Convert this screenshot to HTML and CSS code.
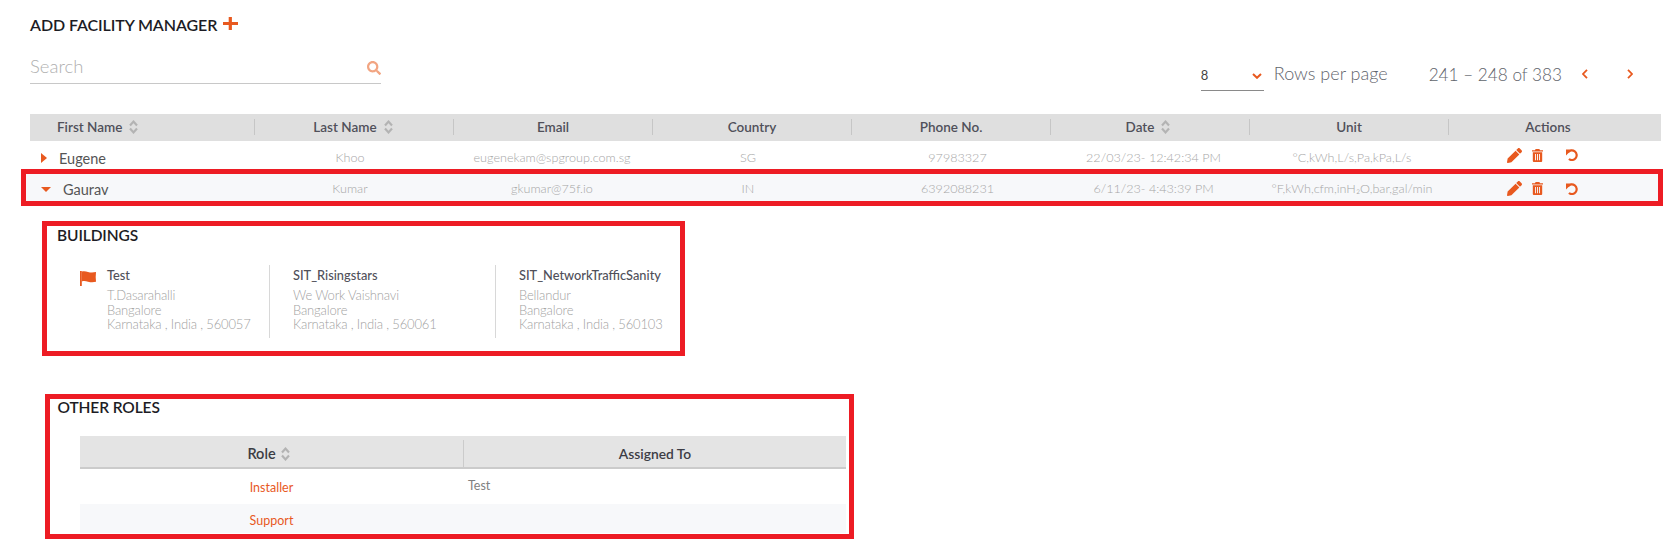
FILE: index.html
```html
<!DOCTYPE html>
<html lang="en">
<head>
<meta charset="utf-8">
<title>Facility Managers</title>
<link rel="stylesheet" href="styles.css">
</head>
<body>
<svg class="defs" width="0" height="0" aria-hidden="true">
  <symbol id="sort" viewBox="0 0 9 14"><path d="M1 5.400 4.500 1.600 8 5.400M1 8.600l3.500 3.800L8 8.600" fill="none" stroke="currentColor" stroke-width="2.200"/></symbol>
  <symbol id="pencil" viewBox="0 0 512 512"><path fill="currentColor" d="M497.900 142.100l-46.100 46.100c-4.700 4.700-12.300 4.700-17 0l-111-111c-4.700-4.700-4.700-12.300 0-17l46.100-46.100c18.700-18.700 49.100-18.700 67.900 0l60.100 60.100c18.800 18.700 18.800 49.100 0 67.900zM284.200 99.800L21.600 362.400.4 483.900c-2.900 16.400 11.400 30.600 27.800 27.800l121.500-21.300 262.600-262.600c4.700-4.700 4.700-12.300 0-17l-111-111c-4.800-4.700-12.400-4.700-17.100 0z"/></symbol>
  <symbol id="trash" viewBox="0 0 11 13"><path fill="currentColor" fill-rule="evenodd" d="M3.600 0h3.800l.6 1.200H11v1.300H0V1.200h3zM.8 3.300h9.400V12a1 1 0 0 1-1 1H1.800a1 1 0 0 1-1-1zM3 5v6.200h.9V5zm2.050 0v6.200h.9V5zM7.100 5v6.200H8V5z"/></symbol>
  <symbol id="undo" viewBox="0 0 12 12"><path fill="none" stroke="currentColor" stroke-width="2.200" d="M2 3.400A4.800 4.800 0 1 1 2.900 10"/><path fill="currentColor" d="M0 .4h6L0 6.400z"/></symbol>
</svg>

<header class="title">
  <h1>ADD FACILITY MANAGER</h1>
  <svg class="plus" viewBox="0 0 15 13" aria-hidden="true"><path d="M5.700 0h3.200v4.900H15v3.200H8.900V13H5.700V8.100H0V4.900h5.700z"/></svg>
</header>

<section class="toolbar">
  <div class="search">
    <span class="search-text">Search</span>
    <svg class="search-icon" viewBox="0 0 512 512" aria-hidden="true"><path d="M505 442.700 405.300 343c-4.500-4.500-10.600-7-17-7H372c27.600-35.300 44-79.700 44-128C416 93.100 322.900 0 208 0S0 93.100 0 208s93.100 208 208 208c48.300 0 92.700-16.400 128-44v16.300c0 6.400 2.500 12.500 7 17l99.700 99.700c9.400 9.400 24.600 9.400 33.900 0l28.300-28.300c9.400-9.400 9.400-24.600.1-34zM208 336c-70.700 0-128-57.200-128-128 0-70.700 57.200-128 128-128 70.700 0 128 57.200 128 128 0 70.700-57.200 128-128 128z"/></svg>
  </div>
  <div class="pager">
    <div class="select">
      <span>8</span>
      <svg class="select-chevron" viewBox="0 0 10 6" aria-hidden="true"><path d="M1 1l4 3.800L9 1"/></svg>
    </div>
    <span class="rows-label">Rows per page</span>
    <span class="range">241 – 248 of 383</span>
    <svg class="page-arrow prev" viewBox="0 0 6 10" aria-hidden="true"><path d="M5 .8 1 5l4 4.200"/></svg>
    <svg class="page-arrow next" viewBox="0 0 6 10" aria-hidden="true"><path d="M1 .8 5 5 1 9.200"/></svg>
  </div>
</section>

<section class="managers">
  <div class="thead">
    <div class="th th-first"><span>First Name</span><svg class="sort"><use href="#sort"/></svg></div>
    <div class="th th-last"><span>Last Name</span><svg class="sort"><use href="#sort"/></svg></div>
    <div class="th">Email</div>
    <div class="th">Country</div>
    <div class="th">Phone No.</div>
    <div class="th th-date"><span>Date</span><svg class="sort"><use href="#sort"/></svg></div>
    <div class="th">Unit</div>
    <div class="th th-actions">Actions</div>
  </div>

  <div class="row">
    <div class="first-cell"><span class="caret-right"></span><span class="name">Eugene</span></div>
    <div class="cell">Khoo</div>
    <div class="cell">eugenekam@spgroup.com.sg</div>
    <div class="cell">SG</div>
    <div class="cell">97983327</div>
    <div class="cell">22/03/23- 12:42:34 PM</div>
    <div class="cell">°C,kWh,L/s,Pa,kPa,L/s</div>
    <div class="actions">
      <svg class="ic-pencil"><use href="#pencil"/></svg>
      <svg class="ic-trash"><use href="#trash"/></svg>
      <svg class="ic-undo"><use href="#undo"/></svg>
    </div>
  </div>

  <div class="row-open">
    <div class="row row-inner">
      <div class="first-cell"><span class="caret-down"></span><span class="name">Gaurav</span></div>
      <div class="cell">Kumar</div>
      <div class="cell">gkumar@75f.io</div>
      <div class="cell">IN</div>
      <div class="cell">6392088231</div>
      <div class="cell">6/11/23- 4:43:39 PM</div>
      <div class="cell">°F,kWh,cfm,inH₂O,bar,gal/min</div>
      <div class="actions">
        <svg class="ic-pencil"><use href="#pencil"/></svg>
        <svg class="ic-trash"><use href="#trash"/></svg>
        <svg class="ic-undo"><use href="#undo"/></svg>
      </div>
    </div>
  </div>
</section>

<section class="buildings">
  <h2>BUILDINGS</h2>
  <div class="building-list">
    <article class="building building-flagged">
      <svg class="flag" viewBox="0 0 16 15" aria-hidden="true"><path d="M0 0h1.800v15H0z"/><path d="M1.800.6c2.200-.6 3.900-.3 6.200.3 2.600.7 5 .7 8 .1-.4 3.300-.4 6.600 0 9.800-3 .7-5.400.5-8-.1-2.300-.7-4-.9-6.200-.3z"/></svg>
      <div class="building-body">
        <h3>Test</h3>
        <p>T.Dasarahalli<br>Bangalore<br>Karnataka , India , 560057</p>
      </div>
    </article>
    <article class="building building-second">
      <div class="building-body">
        <h3>SIT_Risingstars</h3>
        <p>We Work Vaishnavi<br>Bangalore<br>Karnataka , India , 560061</p>
      </div>
    </article>
    <article class="building building-third">
      <div class="building-body">
        <h3>SIT_NetworkTrafficSanity</h3>
        <p>Bellandur<br>Bangalore<br>Karnataka , India , 560103</p>
      </div>
    </article>
  </div>
</section>

<section class="roles">
  <h2>OTHER ROLES</h2>
  <div class="roles-table">
    <div class="roles-head">
      <div class="roles-th roles-th-first"><span>Role</span><svg class="sort"><use href="#sort"/></svg></div>
      <div class="roles-th roles-th-second">Assigned To</div>
    </div>
    <div class="roles-row">
      <div class="role-name">Installer</div>
      <div class="role-assigned">Test</div>
    </div>
    <div class="roles-row roles-row-alt">
      <div class="role-name">Support</div>
      <div class="role-assigned"></div>
    </div>
  </div>
</section>
</body>
</html>
```

FILE: styles.css
```css
* { box-sizing: border-box; }

html, body { margin: 0; padding: 0; }

body {
  width: 1677px;
  height: 543px;
  overflow: hidden;
  background: #fff;
  font-family: Lato, "Liberation Sans", sans-serif;
  color: #555;
}

.defs { position: absolute; }

h1, h2, h3, p { margin: 0; }

.title {
  display: flex;
  align-items: flex-start;
  gap: 6px;
  height: 40px;
  padding: 15px 0 0 30px;
}

.title h1 {
  font-size: 16px;
  line-height: 20px;
  font-weight: 600;
  letter-spacing: -0.1px;
  color: #1c1c24;
}

.plus { width: 15px; height: 13px; margin-top: 2px; fill: #e8591f; }

.toolbar {
  display: flex;
  justify-content: space-between;
  height: 74px;
  padding: 0 30px;
}

.search {
  display: flex;
  align-items: center;
  justify-content: space-between;
  width: 351px;
  height: 44px;
  padding-top: 9px;
  border-bottom: 1px solid #c8c8c8;
}

.search-text { font-size: 18.500px; font-weight: 300; color: #b0b0b0; }

.search-icon { width: 14px; height: 14px; fill: #f2a582; margin-top: 3px; }

.pager {
  display: flex;
  align-items: flex-start;
  height: 52px;
  padding: 22px 0 0;
  margin-right: 14px;
}

.select {
  display: flex;
  justify-content: space-between;
  width: 63px;
  height: 29px;
  padding: 4px 2px 0 0;
  border-bottom: 1px solid #8a8a8a;
  font-size: 13px;
  line-height: 18px;
  color: #444;
}

.select-chevron {
  width: 10px;
  height: 6px;
  margin-top: 7px;
  fill: none;
  stroke: #e8591f;
  stroke-width: 2;
}

.rows-label {
  margin-left: 10px;
  font-size: 18px;
  line-height: 22px;
  font-weight: 300;
  color: #5f646c;
}

.range {
  margin-left: 41px;
  margin-top: 2px;
  font-size: 17.200px;
  line-height: 22px;
  font-weight: 300;
  color: #5f646c;
}

.page-arrow {
  width: 6px;
  height: 10px;
  margin-top: 7px;
  fill: none;
  stroke: #e8591f;
  stroke-width: 1.800;
}

.prev { margin-left: 20px; }
.next { margin-left: 39px; }

.thead {
  display: grid;
  grid-template-columns: 225px repeat(6, 199px) 212px;
  height: 27px;
  margin: 0 16px 0 30px;
  background: #dfdfdf;
}

.th {
  display: flex;
  align-items: center;
  justify-content: center;
  gap: 7px;
  height: 16px;
  margin-top: 5px;
  border-right: 1px solid #c6c6c6;
  font-size: 13.500px;
  font-weight: 600;
  color: #50505a;
}

.th-first { justify-content: flex-start; padding-left: 27px; }

.th-last { padding-right: 2px; }

.th-date { padding-right: 4px; }

.th-actions { border-right: 0; padding-right: 14px; }

.sort { flex: none; width: 9px; height: 14px; color: #b3b3b3; }

.row {
  display: grid;
  grid-template-columns: 222px 196px 208px 184px 235px 157px 240px 189px;
  align-items: center;
  height: 28px;
  padding-top: 4px;
  margin: 0 16px 0 30px;
  font-size: 12.600px;
  font-weight: 300;
  color: #a6a6a6;
}

.cell { text-align: center; white-space: nowrap; }

.first-cell {
  display: flex;
  align-items: center;
  padding: 2px 0 0 11px;
  font-size: 14.500px;
  font-weight: 400;
  color: #555;
}

.caret-right {
  width: 0;
  height: 0;
  margin-right: 12px;
  border-top: 5px solid transparent;
  border-bottom: 5px solid transparent;
  border-left: 6px solid #e8591f;
}

.caret-down {
  width: 0;
  height: 0;
  margin-right: 12px;
  border-left: 5.500px solid transparent;
  border-right: 5.500px solid transparent;
  border-top: 5.500px solid #e8591f;
}

.actions {
  display: flex;
  align-items: center;
  padding-left: 35px;
  margin-top: -4px;
  color: #e8591f;
}

.ic-pencil { width: 15px; height: 15px; }
.ic-trash { width: 11px; height: 13px; margin-left: 10px; }
.ic-undo { width: 12px; height: 12px; margin-left: 23px; }

.row-open {
  height: 37px;
  margin: 0 14px 0 21px;
  border: 5px solid #ed1c24;
  background: #f7f8fa;
}

.row-inner {
  height: 27px;
  padding-top: 2px;
  margin: 0 -2px 0 4px;
}

.row-inner .actions { margin-top: 0; }

.buildings {
  width: 643px;
  height: 135px;
  margin: 15px 0 0 42px;
  padding: 0 0 0 10px;
  border: 5px solid #ed1c24;
}

.buildings h2,
.roles h2 {
  font-size: 15.500px;
  line-height: 18px;
  font-weight: 600;
  letter-spacing: -0.1px;
  color: #1c1c24;
}

.building-list {
  display: flex;
  align-items: stretch;
  height: 73px;
  margin: 21px 0 0 1px;
}

.building {
  display: flex;
  align-items: flex-start;
  padding-top: 3px;
}

.building-flagged {
  width: 212px;
  padding-left: 22px;
  border-right: 1px solid #d8d8d8;
}

.building-second {
  width: 226px;
  padding-left: 23px;
  border-right: 1px solid #d8d8d8;
}

.building-third { padding-left: 23px; }

.flag { flex: none; width: 16px; height: 15px; margin: 3px 11px 0 0; fill: #e8591f; }

.building-body h3 {
  font-size: 12.800px;
  line-height: 15px;
  font-weight: 500;
  color: #50505a;
}

.building-body p {
  margin-top: 5px;
  font-size: 13px;
  line-height: 14.700px;
  letter-spacing: -0.150px;
  font-weight: 300;
  color: #9f9f9f;
  white-space: nowrap;
}

.roles {
  width: 808.500px;
  height: 145px;
  margin: 38px 0 0 45px;
  padding: 0 0 0 7.500px;
  border: 5px solid #ed1c24;
}

.roles h2 { margin-top: -1px; }

.roles-table { width: 766px; margin: 20px 0 0 22.500px; }

.roles-head {
  display: grid;
  grid-template-columns: 383px 383px;
  height: 33px;
  background: #e4e4e4;
  border-bottom: 2px solid #cbcbcb;
}

.roles-th {
  display: flex;
  align-items: center;
  justify-content: center;
  gap: 5px;
  margin-top: 4px;
  font-size: 13.800px;
  font-weight: 600;
  color: #3c3c44;
}

.roles-th-first { padding-right: 6px; font-size: 14.500px; }

.roles-th-second { border-left: 1px solid #cbcbcb; }

.roles-row {
  display: grid;
  grid-template-columns: 383px 383px;
  align-items: center;
  height: 35px;
  padding-top: 2px;
  font-size: 12.500px;
}

.roles-row-alt { height: 29px; padding-top: 4px; background: #f7f8fa; }

.role-name { text-align: center; color: #e8591f; }

.role-assigned { padding: 0 0 4px 5px; color: #808080; }
```
